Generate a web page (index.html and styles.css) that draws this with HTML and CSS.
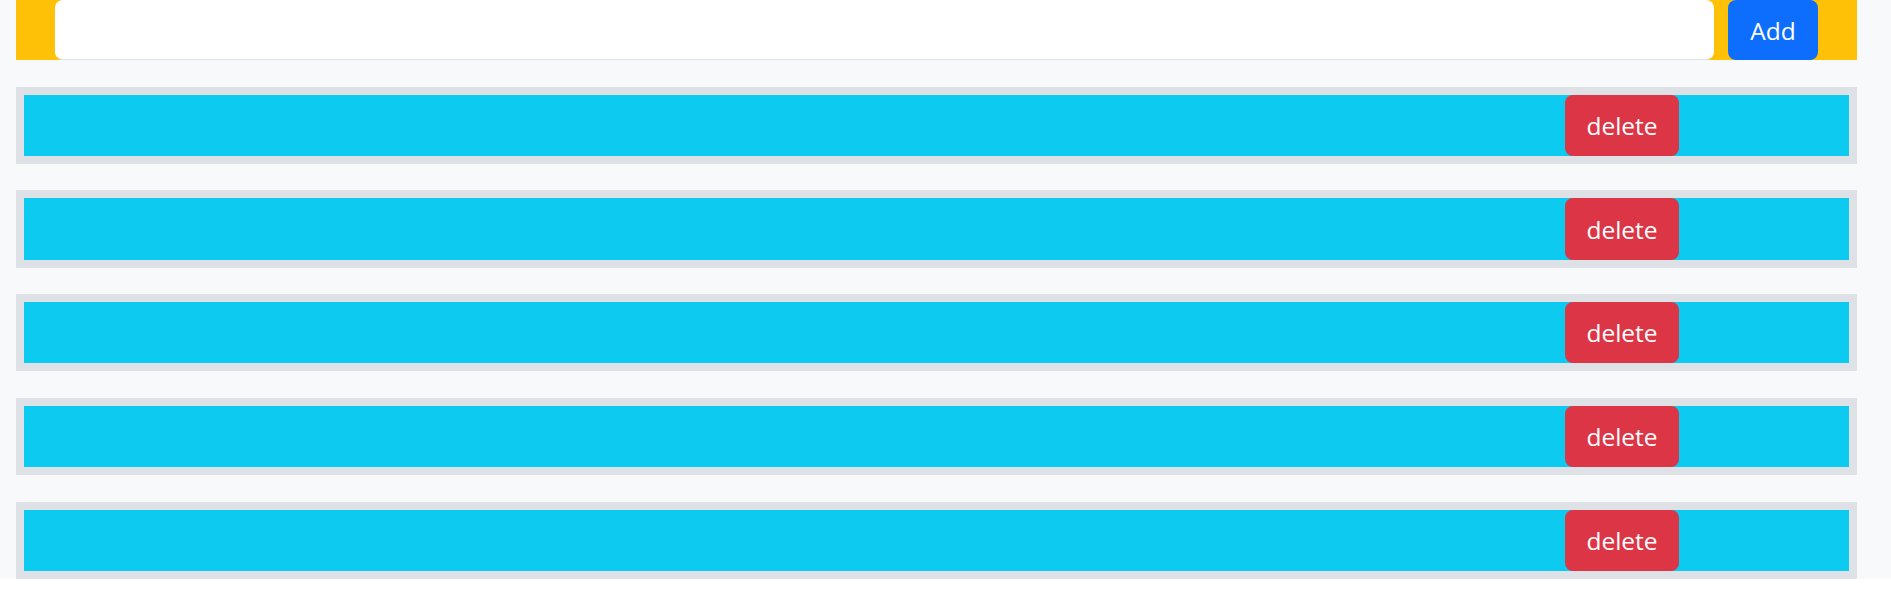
FILE: index.html
```html
<!DOCTYPE html>
<html lang="en">
<head>
<meta charset="utf-8">
<title>Todo</title>
<link rel="stylesheet" href="styles.css">
</head>
<body>
<div class="page">
  <form class="bar">
    <input class="field" type="text" aria-label="New item">
    <button class="btn btn-add" type="button">Add</button>
  </form>
  <ul class="list">
    <li class="item"><div class="item-inner"><span class="item-text"></span><button class="btn btn-delete" type="button">delete</button></div></li>
    <li class="item"><div class="item-inner"><span class="item-text"></span><button class="btn btn-delete" type="button">delete</button></div></li>
    <li class="item"><div class="item-inner"><span class="item-text"></span><button class="btn btn-delete" type="button">delete</button></div></li>
    <li class="item"><div class="item-inner"><span class="item-text"></span><button class="btn btn-delete" type="button">delete</button></div></li>
    <li class="item"><div class="item-inner"><span class="item-text"></span><button class="btn btn-delete" type="button">delete</button></div></li>
  </ul>
</div>
</body>
</html>
```
FILE: styles.css
```css
* { box-sizing: border-box; }
html, body { margin: 0; padding: 0; background: #ffffff; }
body { font-family: "Open Sans", "Noto Sans", "Liberation Sans", sans-serif; }

.page {
  background: #f8f9fa;
  padding: 0 34px 0.5px 16px;
}

.bar {
  margin: 0;
  display: flex;
  gap: 14px;
  height: 60px;
  padding: 0 39px;
  background: #ffc107;
}

.field {
  flex: 1;
  height: 60px;
  margin: 0;
  border: 1px solid #ffffff;
  border-bottom-color: #dee2e6;
  border-radius: 8px;
  background: #ffffff;
  font: inherit;
  outline: none;
}

.btn {
  font-family: inherit;
  font-size: 24.5px;
  line-height: 1;
  color: #ffffff;
  border: none;
  border-radius: 8px;
  padding: 2px 0 0;
  margin: 0;
  cursor: pointer;
}

.btn-add {
  width: 90px;
  height: 60px;
  background: #0d6efd;
}

.list {
  list-style: none;
  margin: 0;
  padding: 0;
}

.item {
  margin-top: 26.5px;
  padding: 8px;
  background: #dee2e6;
}

.item-inner {
  display: grid;
  grid-template-columns: 1fr 114px 170px;
  height: 61.25px;
  background: #0dcaf0;
}

.btn-delete {
  grid-column: 2;
  width: 114px;
  height: 61.25px;
  background: #dc3545;
}
```
